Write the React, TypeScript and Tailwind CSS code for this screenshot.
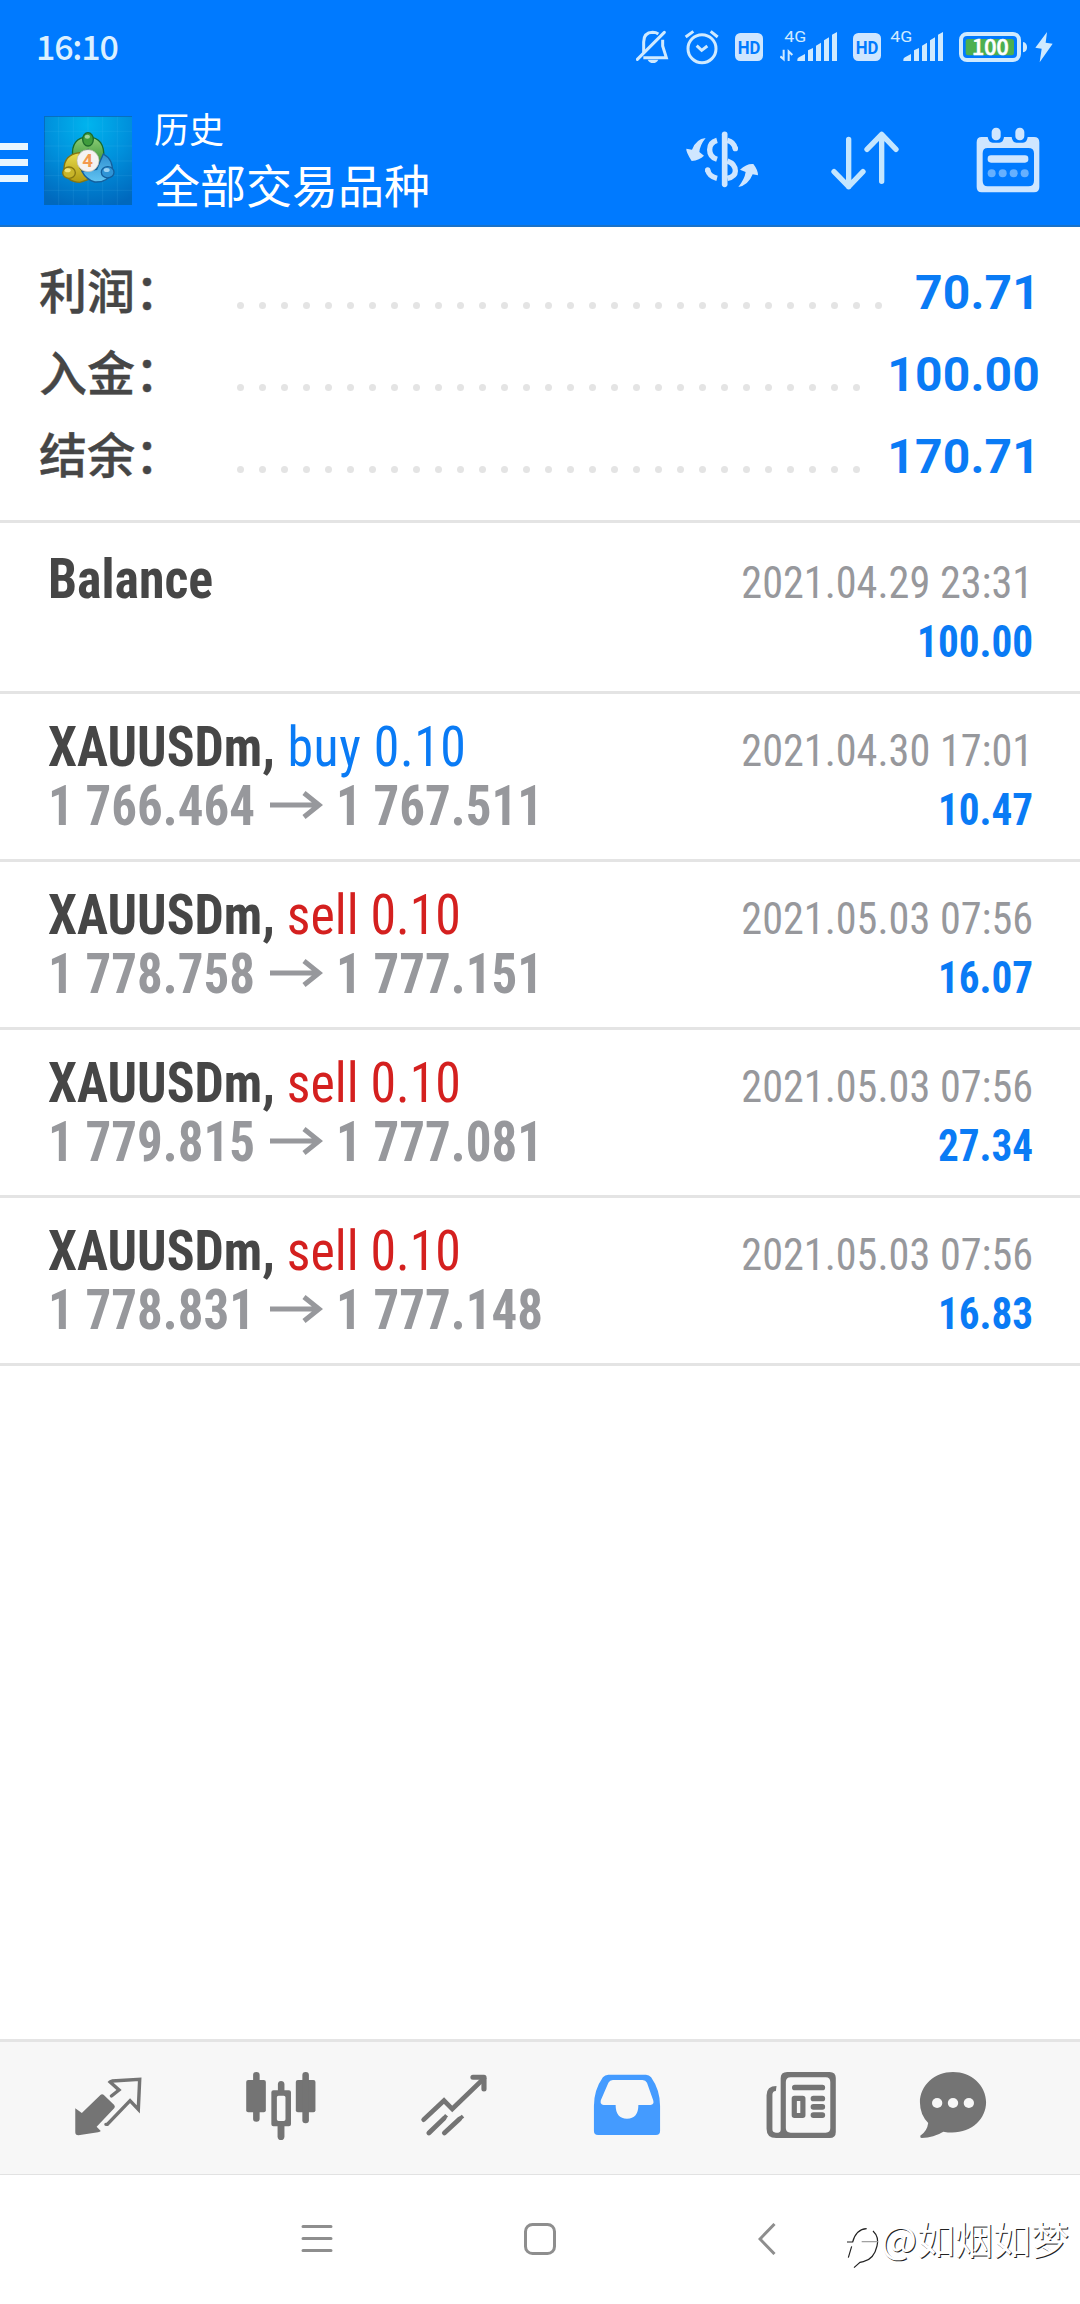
const deals = [
  { symbol: "Balance", time: "2021.04.29 23:31", profit: "100.00" },
  { symbol: "XAUUSDm,", side: "buy", volume: "0.10", open: "1 766.464", close: "1 767.511", time: "2021.04.30 17:01", profit: "10.47" },
  { symbol: "XAUUSDm,", side: "sell", volume: "0.10", open: "1 778.758", close: "1 777.151", time: "2021.05.03 07:56", profit: "16.07" },
  { symbol: "XAUUSDm,", side: "sell", volume: "0.10", open: "1 779.815", close: "1 777.081", time: "2021.05.03 07:56", profit: "27.34" },
  { symbol: "XAUUSDm,", side: "sell", volume: "0.10", open: "1 778.831", close: "1 777.148", time: "2021.05.03 07:56", profit: "16.83" },
];

const totals = [
  { label: "利润：", value: "70.71", dots: 30 },
  { label: "入金：", value: "100.00", dots: 29 },
  { label: "结余：", value: "170.71", dots: 29 },
];

function HdBadge() {
  return (
    <svg className="h-[38px] w-[30px]" viewBox="0 54 90 114">
      <rect x="3" y="69" width="84" height="84" rx="16" fill="#cfe6ff" />
      <text x="45" y="133" textAnchor="middle" textLength="68" lengthAdjust="spacingAndGlyphs" fontSize="56" fontWeight="700" fontFamily="Roboto, sans-serif" fill="#007aff">
        HD
      </text>
    </svg>
  );
}

function Signal({ data = false }: { data?: boolean }) {
  return (
    <svg className={data ? "h-[38px] w-[58px]" : "h-[38px] w-[54px]"} viewBox={data ? "480 54 174 114" : "492 54 162 114"}>
      <text x="493" y="95" fontSize="43" textLength="66" lengthAdjust="spacingAndGlyphs" fontFamily="Roboto, sans-serif" fill="#cfeaff">
        4G
      </text>
      {data && <path d="M481 139 L491 148 V119 M506 153 V124 L517 135" fill="none" stroke="#cfeaff" strokeWidth="6" />}
      <path
        d="M532 153 V149 Q532 145 537 142 L555 132 V153Z M564 153 V121 L579 114 V153Z M588 153 V107 L603 98 V153Z M612 153 V91 L627 82 V153Z M636 153 V74 L651 66 V153Z"
        fill="#cfeaff"
      />
    </svg>
  );
}

function StatusBar() {
  return (
    <div className="flex h-[94px] items-start pt-7 pr-[26px] pl-[36px] font-['Noto_Sans_CJK_SC',sans-serif] text-[#dcf0ff]">
      <span className="-mt-px text-[34px] leading-[38px] font-medium tracking-[-1.2px]">16:10</span>
      <div className="ml-auto flex">
        <svg className="h-[38px] w-[33px]" viewBox="48 54 99 114" fill="none" stroke="#cfeaff" strokeWidth="9">
          <path d="M71 128 V96 Q71 68 98 67 Q108 67 115 72 M128 89 V108 L139 143 H70" />
          <path d="M52 148 L133 67" strokeLinecap="round" />
          <path d="M83 149 H115 Q110 159 99 159 Q88 159 83 149Z" fill="#cfeaff" stroke="none" />
        </svg>
        <svg className="ml-[15px] h-[38px] w-9" viewBox="192 54 108 114" fill="none" stroke="#cfeaff" strokeWidth="9">
          <circle cx="246" cy="116" r="42" />
          <path d="M230 107 L245 121 L262 108 M197 81 L220 64 M272 64 L293 81" />
        </svg>
        <div className="ml-[14px]">
          <HdBadge />
        </div>
        <div className="ml-4">
          <Signal data />
        </div>
        <div className="ml-[14px]">
          <HdBadge />
        </div>
        <div className="ml-2">
          <Signal />
        </div>
        <svg className="ml-[14px] h-[38px] w-[70px]" viewBox="1014 54 210 114">
          <rect x="1023" y="72" width="174" height="78" rx="18" fill="none" stroke="#cfeaff" strokeWidth="12" />
          <rect x="1037" y="87" width="145" height="49" rx="7" fill="#4caf50" />
          <path d="M1209 96 Q1221 98 1221 112 Q1221 125 1209 127Z" fill="#cfeaff" />
          <text x="1111" y="136" textAnchor="middle" textLength="110" lengthAdjust="spacingAndGlyphs" fontSize="64" fontWeight="500" stroke="#fff" strokeWidth="2" fill="#fff">
            100
          </text>
        </svg>
        <svg className="ml-1.5 h-[38px] w-5" viewBox="1242 54 60 114">
          <path d="M1281 66 L1246 113 L1265 116 L1259 157 L1298 101 L1277 98Z" fill="#cfeaff" />
        </svg>
      </div>
    </div>
  );
}

function AppLogo() {
  return (
    <svg className="h-[89px] w-[88px]" viewBox="132 348 264 267">
      <defs>
        <radialGradient id="sky" cx="0.5" cy="0.1" r="0.95">
          <stop offset="0" stopColor="#00b4ee" />
          <stop offset="0.5" stopColor="#0090dc" />
          <stop offset="1" stopColor="#0068bd" />
        </radialGradient>
        <linearGradient id="green" x2="0" y2="1">
          <stop offset="0" stopColor="#8fcf78" />
          <stop offset="1" stopColor="#2c8a2b" />
        </linearGradient>
        <linearGradient id="yellow" x2="0" y2="1">
          <stop offset="0" stopColor="#e9dc50" />
          <stop offset="1" stopColor="#b09a10" />
        </linearGradient>
        <linearGradient id="blue" x2="0" y2="1">
          <stop offset="0" stopColor="#2f8fd0" />
          <stop offset="1" stopColor="#62c4f2" />
        </linearGradient>
      </defs>
      <rect x="132" y="348" width="264" height="267" fill="url(#sky)" />
      <path d="M133 349H396M133 349V615" stroke="#0868b8" strokeWidth="3" />
      <path d="M176 350V615M220 350V615M264 350V615M308 350V615M352 350V615M132 394H396M132 438H396M132 483H396M132 527H396M132 571H396" stroke="#6fd0ff" strokeOpacity="0.16" strokeWidth="2" />
      <g strokeWidth="4">
        <path d="M218 470 Q212 414 264 410 Q316 414 311 474 L290 502 L264 448 L240 462Z" fill="url(#green)" stroke="#176b2b" />
        <path d="M238 458 Q192 464 192 508 Q198 546 240 547 L266 538 L240 505Z" fill="url(#yellow)" stroke="#857511" />
        <path d="M310 462 Q342 480 336 518 Q322 548 284 546 Q258 538 246 514 L290 508Z" fill="url(#blue)" stroke="#145f9d" />
        <ellipse cx="264" cy="418" rx="16" ry="20" fill="#3f9c3d" stroke="#1d6b2a" />
        <ellipse cx="207" cy="518" rx="19" ry="17" fill="#c8b52a" stroke="#857511" />
        <ellipse cx="323" cy="517" rx="19" ry="17" fill="#2f94d6" stroke="#145f9d" />
      </g>
      <ellipse cx="262" cy="410" rx="8" ry="6" fill="#c9ecc0" opacity="0.7" />
      <ellipse cx="203" cy="511" rx="9" ry="6" fill="#fff6a0" opacity="0.7" />
      <ellipse cx="320" cy="510" rx="9" ry="6" fill="#c6ebff" opacity="0.7" />
      <circle cx="264" cy="482" r="33" fill="#f5f3f1" stroke="#b8b8b0" strokeWidth="2" />
      <text x="263" y="501" textAnchor="middle" fontSize="56" fontWeight="700" fontFamily="Roboto, sans-serif" fill="#f39a4d">
        4
      </text>
    </svg>
  );
}

function Header() {
  return (
    <header className="h-[227px] border-b-2 border-[#1a72c8] bg-[#007aff]">
      <StatusBar />
      <div className="flex items-start">
        <div className="mt-[49px] flex w-7 flex-col gap-[9px]">
          <span className="h-[7px] bg-[#e8f6ff]" />
          <span className="h-[7px] bg-[#e8f6ff]" />
          <span className="h-[7px] bg-[#e8f6ff]" />
        </div>
        <div className="mt-[22px] ml-4">
          <AppLogo />
        </div>
        <div className="mt-2 ml-[22px] font-['Noto_Sans_CJK_SC',sans-serif] text-white">
          <div className="text-[35px] leading-[52px]">历史</div>
          <div className="-mt-px text-[46px] leading-[60px]">全部交易品种</div>
        </div>
        <div className="mt-8 mr-10 ml-auto flex">
          <svg className="h-[68px] w-[74px]" viewBox="75 48 222 204" fill="none" stroke="#cfe6ff" strokeWidth="16">
            <path d="M194 73V223" strokeWidth="17" strokeLinecap="round" />
            <path d="M171 91 Q149 97 149 119 Q149 141 171 148 M171 205 Q147 199 143 180" />
            <path d="M202 91 Q222 96 226 116 M202 153 Q226 162 226 183 Q226 200 202 205" />
            <path d="M143 180v1M226 115v1" strokeLinecap="round" />
            <path d="M137 84 Q108 87 96 119 L79 116 Q77 124 95 153 Q119 150 132 137 L118 126 Q120 105 137 84Z" fill="#cfe6ff" stroke="none" />
            <path d="M235 231 Q265 226 278 193 L294 196 Q294 180 280 162 Q260 160 240 179 L257 186 Q254 207 235 231Z" fill="#cfe6ff" stroke="none" />
          </svg>
          <svg className="ml-[71px] h-[68px] w-[70px]" viewBox="510 48 210 204" fill="none" stroke="#c4e6ff" strokeWidth="16" strokeLinecap="round" strokeLinejoin="round">
            <path d="M566 88V230M522 185L566 230L609 185" />
            <path d="M665 214V73M621 118L665 73L708 118" />
          </svg>
          <svg className="ml-[76px] h-[68px] w-16" viewBox="948 48 192 204" fill="#cfe6ff">
            <path fillRule="evenodd" d="M965 81 H983 Q986 98 998 98 H1018 Q1030 98 1032 81 H1055 Q1057 98 1069 98 H1089 Q1101 98 1103 81 H1122 Q1138 81 1138 97 V231 Q1138 247 1122 247 H965 Q950 247 950 231 V97 Q950 81 965 81Z M983 114 Q968 114 968 130 V212 Q968 229 983 229 H1105 Q1122 229 1122 212 V130 Q1122 114 1105 114Z" />
            <rect x="995" y="53" width="27" height="38" rx="13" />
            <rect x="1066" y="53" width="27" height="38" rx="13" />
            <rect x="983" y="136" width="122" height="22" rx="10" />
            <g fill="#66b0ff">
              <circle cx="995" cy="190" r="12" />
              <circle cx="1028" cy="190" r="12" />
              <circle cx="1061" cy="190" r="12" />
              <circle cx="1094" cy="190" r="12" />
            </g>
          </svg>
        </div>
      </div>
    </header>
  );
}

function Summary() {
  return (
    <section className="flex h-[296px] flex-col border-b-[3px] border-[#e4e4e4] pt-[23px] pr-10 pl-[39px]">
      {totals.map((row) => (
        <div key={row.label} className="flex h-[82px] items-center">
          <span className="-mt-1.5 w-[198px] font-['Noto_Sans_CJK_SC',sans-serif] text-[48px] leading-[76px] font-medium text-[#464646] [-webkit-text-stroke:0.4px_#464646]">
            {row.label}
          </span>
          <span className="mt-[29px] flex gap-[15px]">
            {Array.from({ length: row.dots }, (_, i) => (
              <span key={i} className="size-[7px] rounded-full bg-[#e4e4e4]" />
            ))}
          </span>
          <span className="mt-1 ml-auto font-[Roboto,sans-serif] text-[48px] font-bold tracking-[0.2px] text-[#0a7bf5]">
            {row.value}
          </span>
        </div>
      ))}
    </section>
  );
}

function DealRow({ deal }: { deal: (typeof deals)[number] }) {
  return (
    <div className="flex h-[168px] justify-between border-b-[3px] border-[#e4e4e4] pt-[22px] pr-[47px] pl-12 text-[55px] font-bold whitespace-nowrap font-stretch-condensed">
      <div>
        <div className="h-[59px] origin-left scale-x-[0.942] leading-[63px] text-[#464646]">
          {deal.symbol}
          {deal.side && (
            <span
              className={
                deal.side === "buy"
                  ? "font-normal tracking-[0.6px] text-[#0a7bf5]"
                  : "font-normal text-[#d4201f]"
              }
            >
              {" "}
              {deal.side} {deal.volume}
            </span>
          )}
        </div>
        {deal.open && (
          <div className="flex h-[59px] items-center leading-[64px] text-[#97989c]">
            <span className="mt-0.5 w-[222px] origin-left scale-x-[0.927]">{deal.open}</span>
            <svg className="h-7 w-[53px]" viewBox="0 0 53 28" fill="none" stroke="#97989c" strokeWidth="5">
              <path d="M0 14H48M34 2L49 14L34 26" />
            </svg>
            <span className="mt-0.5 ml-[13px] origin-left scale-x-[0.927]">{deal.close}</span>
          </div>
        )}
      </div>
      <div className="text-right text-[45px]">
        <div className="h-[59px] origin-right scale-x-[0.938] leading-[70px] font-normal text-[#97989c]">{deal.time}</div>
        <div className="origin-right scale-x-[0.915] leading-[70px] text-[#0a7bf5]">{deal.profit}</div>
      </div>
    </div>
  );
}

function TabBar() {
  return (
    <nav className="flex h-[136px] gap-[101px] border-t-[3px] border-b border-t-[#e4e4e4] border-b-[#e2e2e2] bg-[#f7f7f7] pt-7 pl-[72px] text-[#747474]">
      <svg className="size-[72px]" viewBox="209.5 120 209 216" preserveAspectRatio="none" fill="currentColor">
        <path d="M219 235 L238 249 L292 195 Q297 190 302 195 L332 225 Q336 230 332 235 L281 290 L293 303 Q291 306 285 307 L228 316 Q219 316 219 307Z" />
        <path d="M324 198 L346 180 L320 156 Q322 154 326 153 L406 148 L402 238 L378 212 L312 283 H308" fill="none" stroke="currentColor" strokeWidth="10" strokeLinecap="round" />
      </svg>
      <svg className="size-[72px]" viewBox="711.5 120 209 216" preserveAspectRatio="none" fill="currentColor">
        <rect x="715" y="150" width="57" height="97" rx="6" />
        <rect x="735" y="126" width="19" height="149" rx="9" />
        <rect x="859" y="150" width="57" height="97" rx="6" />
        <rect x="878" y="126" width="19" height="154" rx="9" />
        <path d="M807 183 V162 Q808 153 816 153 Q825 153 826 162 V183Z M806 286 H826 V320 Q825 330 816 330 Q807 330 806 320Z" />
        <path fillRule="evenodd" d="M794 181 H839 Q845 181 845 187 V283 Q845 289 839 289 H794 Q788 289 788 283 V187 Q788 181 794 181Z M809 197 Q804 197 804 202 V268 Q804 273 809 273 H824 Q829 273 829 268 V202 Q829 197 824 197Z" />
      </svg>
      <svg className="size-[72px]" viewBox="1213.5 120 209 216" preserveAspectRatio="none" fill="none" stroke="currentColor" strokeWidth="14" strokeLinecap="round">
        <path d="M1230 269L1289 212L1313 237L1405 145" />
        <path d="M1373 142H1405V177" strokeWidth="15" strokeLinejoin="round" />
        <path d="M1245 309L1289 265M1290 309L1334 267" />
        <path d="M1289 265L1293 260M1334 267L1340 262" strokeLinecap="square" strokeWidth="11" />
      </svg>
      <svg className="size-[72px]" viewBox="149.5 120 209 216" preserveAspectRatio="none" fill="#449bff">
        <path
          fillRule="evenodd"
          d="M200 134 H309 Q318 134 324 142 Q350 180 350 228 V302 Q350 315 338 315 H170 Q158 315 158 302 V228 Q158 180 184 142 Q190 134 200 134Z M213 150 Q204 150 200 158 L178 211 Q175 224 186 225 H221 Q221 266 254 266 Q287 266 287 225 H322 Q334 224 330 211 L312 158 Q308 150 299 150Z"
        />
      </svg>
      <svg className="ml-px size-[72px]" viewBox="652.5 120 209 216" preserveAspectRatio="none" fill="currentColor">
        <path fillRule="evenodd" d="M717 126 H840 Q858 126 858 144 V306 Q858 324 840 324 H685 Q657 324 657 296 V196 Q657 168 686 168 L684 183 Q674 184 674 194 V298 Q674 308 684 308 H691 Q698 308 698 298 V144 Q698 126 717 126Z M727 142 Q713 142 713 156 V294 Q713 308 727 308 H829 Q842 308 842 294 V156 Q842 142 829 142Z" />
        <rect x="731" y="164" width="96" height="17" rx="8" />
        <rect x="785" y="197" width="42" height="17" rx="8" />
        <rect x="785" y="222" width="42" height="17" rx="8" />
        <rect x="785" y="247" width="42" height="17" rx="8" />
        <path fillRule="evenodd" d="M738 197 H762 Q770 197 770 205 V256 Q770 264 762 264 H738 Q730 264 730 256 V205 Q730 197 738 197Z M745 213V249H755V213Z" />
      </svg>
      <svg className="-ml-[21px] size-[72px]" viewBox="1094.5 120 209 216" preserveAspectRatio="none" fill="currentColor">
        <path d="M1199 126 C1252 126 1295 166 1295 217 C1295 273 1243 319 1171 305 Q1143 323 1108 324 Q1103 324 1104 317 Q1124 304 1127 279 Q1103 254 1103 217 C1103 166 1146 126 1199 126Z" />
        <g fill="#f7f7f7">
          <circle cx="1153" cy="219" r="15" />
          <circle cx="1199" cy="219" r="15" />
          <circle cx="1245" cy="219" r="15" />
        </g>
      </svg>
    </nav>
  );
}

function SystemNav() {
  return (
    <div className="flex h-[129px] items-start pt-12 pl-[300px]">
      <svg className="h-8 w-[34px]" viewBox="0 0 34 32" stroke="#8e8e8e" strokeWidth="3">
        <path d="M3 3.5H31M3 15.5H31M3 27.5H31" strokeLinecap="round" />
      </svg>
      <svg className="ml-[190px] h-8 w-8" viewBox="0 0 32 32" fill="none" stroke="#8e8e8e" strokeWidth="3">
        <rect x="1.5" y="1.5" width="29" height="29" rx="7" />
      </svg>
      <svg className="ml-[202px] h-8 w-[18px]" viewBox="0 0 18 32" fill="none" stroke="#8e8e8e" strokeWidth="3">
        <path d="M16.5 1L2 16L16.5 31" />
      </svg>
      <div className="ml-[70px] flex">
        <svg className="h-12 w-[35px]" viewBox="18 36 105 144" fill="none" stroke="#222" strokeWidth="3.5">
          <path d="M21 93H38Q48 55 80 53M35 106L25 140M99 60Q118 78 111 105Q102 145 70 152L60 154L42 170" />
          <path d="M65 92H114" stroke="#999" />
        </svg>
        <span className="-mt-2 font-['Noto_Sans_CJK_SC',sans-serif] text-[38px] leading-[46px] whitespace-nowrap text-white [text-shadow:1px_1px_0_#222]">
          @如烟如梦
        </span>
      </div>
    </div>
  );
}

export default function App() {
  return (
    <div className="flex h-[2304px] w-[1080px] flex-col overflow-hidden bg-white font-['Roboto_Condensed',Roboto,sans-serif]">
      <Header />
      <Summary />
      <main className="flex-1 pt-[3px]">
        {deals.map((deal, i) => (
          <DealRow key={i} deal={deal} />
        ))}
      </main>
      <TabBar />
      <SystemNav />
    </div>
  );
}
